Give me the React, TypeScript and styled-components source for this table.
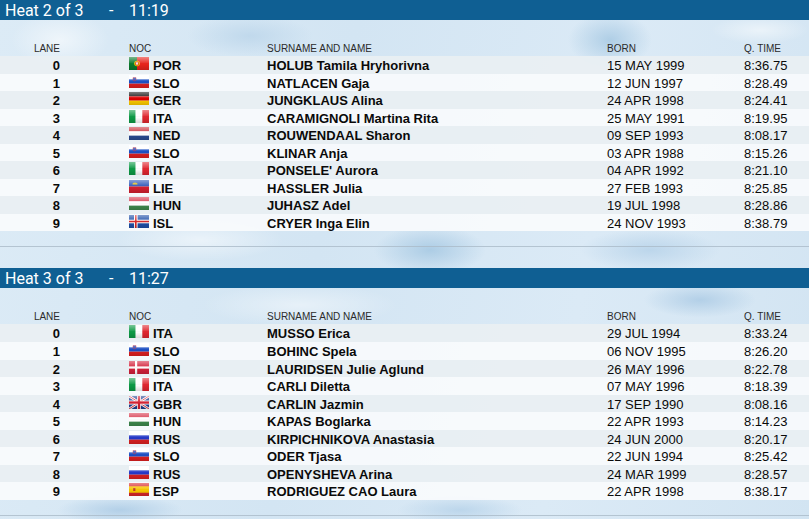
import React, { useId } from "react";
import styled, { createGlobalStyle } from "styled-components";

const Global = createGlobalStyle`
  html, body { margin: 0; padding: 0; }
  body { font-family: "Liberation Sans", Arial, sans-serif; }
`;

const Page = styled.div`
  width: 100%;
  min-height: 100vh;
  overflow: hidden;
  background-color: #d7e8f4;
  background-image:
    radial-gradient(ellipse 70px 40px at 60px 40px, rgba(255,255,255,0.55), transparent 70%),
    radial-gradient(ellipse 90px 30px at 250px 36px, rgba(190,215,235,0.9), transparent 70%),
    radial-gradient(ellipse 60px 40px at 610px 40px, rgba(170,203,228,0.9), transparent 70%),
    radial-gradient(ellipse 80px 35px at 430px 250px, rgba(170,203,228,0.95), transparent 70%),
    radial-gradient(ellipse 120px 30px at 200px 240px, rgba(255,255,255,0.5), transparent 70%),
    radial-gradient(ellipse 100px 30px at 650px 250px, rgba(185,212,234,0.9), transparent 70%),
    radial-gradient(ellipse 80px 25px at 700px 300px, rgba(175,205,230,0.9), transparent 70%),
    radial-gradient(ellipse 140px 30px at 300px 305px, rgba(255,255,255,0.45), transparent 70%),
    radial-gradient(ellipse 90px 20px at 120px 510px, rgba(175,205,230,0.9), transparent 70%),
    radial-gradient(ellipse 90px 20px at 460px 510px, rgba(185,212,234,0.9), transparent 70%),
    radial-gradient(ellipse 70px 20px at 760px 30px, rgba(255,255,255,0.5), transparent 70%),
    linear-gradient(100deg, #dcebf6 0%, #d3e5f3 40%, #dbeaf6 70%, #d2e4f2 100%);
`;

const Section = styled.section`
  display: flex;
  flex-direction: column;
`;

const HeatBar = styled.div`
  height: 20px;
  box-sizing: border-box;
  padding: 2px 0 0 5px;
  background: #0f5f93;
  color: #ffffff;
  font-family: Roboto, "Noto Sans", sans-serif;
  font-size: 16px;
  line-height: 18px;
  display: flex;
  white-space: nowrap;
`;

const HeatTitle = styled.span`
  width: 104px;
`;

const HeatDash = styled.span`
  width: 20px;
`;

const HeatTime = styled.span``;

const Grid = styled.div`
  display: grid;
  grid-template-columns: 129px 138px 340px 137px 1fr;
`;

const HeadRow = styled(Grid)`
  margin-top: 20px;
  height: 16px;
  box-sizing: border-box;
  padding-top: 3px;
  font-size: 10px;
  line-height: 12px;
  color: #2b2b2b;
  text-transform: uppercase;
`;

const Row = styled(Grid)<{ $alt: boolean }>`
  height: 17.56px;
  box-sizing: border-box;
  padding-top: 1px;
  font-size: 13px;
  line-height: 17px;
  color: #0a0a0a;
  background: ${(p) => (p.$alt ? "rgba(251,252,253,0.88)" : "rgba(234,239,243,0.9)")};
  white-space: nowrap;
`;

const LaneCell = styled.div<{ $bold?: boolean }>`
  text-align: right;
  padding-right: 69px;
  font-weight: ${(p) => (p.$bold ? 700 : 400)};
`;

const Cell = styled.div<{ $bold?: boolean }>`
  font-weight: ${(p) => (p.$bold ? 700 : 400)};
`;

const NocCell = styled.div`
  font-weight: 700;
`;

const FlagSvg = styled.svg`
  width: 20px;
  height: 13px;
  margin-right: 4px;
  vertical-align: baseline;
`;

const Divider = styled.div`
  margin-top: 15px;
  height: 1px;
  background: rgba(170, 186, 200, 0.8);
  margin-bottom: 21px;
`;

type Noc =
  | "POR" | "SLO" | "GER" | "ITA" | "NED" | "LIE" | "HUN" | "ISL"
  | "DEN" | "GBR" | "RUS" | "ESP";

const FlagBody: React.FC<{ noc: Noc }> = ({ noc }) => {
  switch (noc) {
    case "POR":
      return (
        <>
          <rect width="20" height="13" fill="#e8231c" />
          <rect width="8" height="13" fill="#0a7a2c" />
          <circle cx="8" cy="6.5" r="2.8" fill="#f5d400" />
          <rect x="6.8" y="5" width="2.4" height="3" fill="#fff" stroke="#c00" strokeWidth="0.6" />
        </>
      );
    case "SLO":
      return (
        <>
          <rect width="20" height="13" fill="#ffffff" />
          <rect y="4.33" width="20" height="4.34" fill="#1b4fc4" />
          <rect y="8.67" width="20" height="4.33" fill="#e02020" />
          <path d="M4 2.6 h3 v2.6 q-1.5 1.6 -3 0 z" fill="#1b4fc4" stroke="#e02020" strokeWidth="0.5" />
        </>
      );
    case "GER":
      return (
        <>
          <rect width="20" height="4.34" fill="#111" />
          <rect y="4.33" width="20" height="4.34" fill="#dd0000" />
          <rect y="8.67" width="20" height="4.33" fill="#ffce00" />
        </>
      );
    case "ITA":
      return (
        <>
          <rect width="6.67" height="13" fill="#0d9a45" />
          <rect x="6.67" width="6.66" height="13" fill="#ffffff" />
          <rect x="13.33" width="6.67" height="13" fill="#e0262f" />
        </>
      );
    case "NED":
      return (
        <>
          <rect width="20" height="4.34" fill="#c9303b" />
          <rect y="4.33" width="20" height="4.34" fill="#ffffff" />
          <rect y="8.67" width="20" height="4.33" fill="#2a4c93" />
        </>
      );
    case "LIE":
      return (
        <>
          <rect width="20" height="6.5" fill="#2a55b8" />
          <rect y="6.5" width="20" height="6.5" fill="#d42030" />
          <path d="M3.5 4.4 l0.5 -2 l1 1 l1 -1.4 l1 1.4 l1 -1 l0.5 2 z" fill="#f2c500" />
        </>
      );
    case "HUN":
      return (
        <>
          <rect width="20" height="4.34" fill="#d7364a" />
          <rect y="4.33" width="20" height="4.34" fill="#ffffff" />
          <rect y="8.67" width="20" height="4.33" fill="#3f8a4e" />
        </>
      );
    case "ISL":
      return (
        <>
          <rect width="20" height="13" fill="#1f4fa8" />
          <rect x="5" width="3.6" height="13" fill="#fff" />
          <rect y="4.7" width="20" height="3.6" fill="#fff" />
          <rect x="6" width="1.6" height="13" fill="#d72828" />
          <rect y="5.7" width="20" height="1.6" fill="#d72828" />
        </>
      );
    case "DEN":
      return (
        <>
          <rect width="20" height="13" fill="#d3213b" />
          <rect x="6" width="2.2" height="13" fill="#fff" />
          <rect y="5.4" width="20" height="2.2" fill="#fff" />
        </>
      );
    case "GBR":
      return (
        <>
          <rect width="20" height="13" fill="#1f3f8f" />
          <path d="M0 0 L20 13 M20 0 L0 13" stroke="#fff" strokeWidth="2.6" />
          <path d="M0 0 L20 13 M20 0 L0 13" stroke="#d42030" strokeWidth="0.9" />
          <rect x="8" width="4" height="13" fill="#fff" />
          <rect y="4.5" width="20" height="4" fill="#fff" />
          <rect x="8.8" width="2.4" height="13" fill="#d42030" />
          <rect y="5.3" width="20" height="2.4" fill="#d42030" />
        </>
      );
    case "RUS":
      return (
        <>
          <rect width="20" height="4.34" fill="#ffffff" />
          <rect y="4.33" width="20" height="4.34" fill="#2438c8" />
          <rect y="8.67" width="20" height="4.33" fill="#dd2222" />
        </>
      );
    case "ESP":
      return (
        <>
          <rect width="20" height="13" fill="#d8262b" />
          <rect y="3.25" width="20" height="6.5" fill="#f7c600" />
          <rect x="4.2" y="5" width="2.2" height="3" fill="#c0392b" />
        </>
      );
  }
};

const Flag: React.FC<{ noc: Noc }> = ({ noc }) => {
  const id = useId().replace(/:/g, "");
  return (
    <FlagSvg viewBox="0 0 20 13" aria-hidden="true">
      <defs>
        <linearGradient id={`g${id}`} x1="0" y1="0" x2="0" y2="1">
          <stop offset="0" stopColor="#fff" stopOpacity="0.45" />
          <stop offset="0.45" stopColor="#fff" stopOpacity="0.08" />
          <stop offset="0.55" stopColor="#000" stopOpacity="0" />
          <stop offset="1" stopColor="#000" stopOpacity="0.15" />
        </linearGradient>
      </defs>
      <FlagBody noc={noc} />
      <rect width="20" height="13" fill={`url(#g${id})`} />
    </FlagSvg>
  );
};

type Athlete = [number, Noc, string, string, string];

const heats: { title: string; time: string; rows: Athlete[] }[] = [
  {
    title: "Heat 2 of 3",
    time: "11:19",
    rows: [
      [0, "POR", "HOLUB Tamila Hryhorivna", "15 MAY 1999", "8:36.75"],
      [1, "SLO", "NATLACEN Gaja", "12 JUN 1997", "8:28.49"],
      [2, "GER", "JUNGKLAUS Alina", "24 APR 1998", "8:24.41"],
      [3, "ITA", "CARAMIGNOLI Martina Rita", "25 MAY 1991", "8:19.95"],
      [4, "NED", "ROUWENDAAL Sharon", "09 SEP 1993", "8:08.17"],
      [5, "SLO", "KLINAR Anja", "03 APR 1988", "8:15.26"],
      [6, "ITA", "PONSELE' Aurora", "04 APR 1992", "8:21.10"],
      [7, "LIE", "HASSLER Julia", "27 FEB 1993", "8:25.85"],
      [8, "HUN", "JUHASZ Adel", "19 JUL 1998", "8:28.86"],
      [9, "ISL", "CRYER Inga Elin", "24 NOV 1993", "8:38.79"],
    ],
  },
  {
    title: "Heat 3 of 3",
    time: "11:27",
    rows: [
      [0, "ITA", "MUSSO Erica", "29 JUL 1994", "8:33.24"],
      [1, "SLO", "BOHINC Spela", "06 NOV 1995", "8:26.20"],
      [2, "DEN", "LAURIDSEN Julie Aglund", "26 MAY 1996", "8:22.78"],
      [3, "ITA", "CARLI Diletta", "07 MAY 1996", "8:18.39"],
      [4, "GBR", "CARLIN Jazmin", "17 SEP 1990", "8:08.16"],
      [5, "HUN", "KAPAS Boglarka", "22 APR 1993", "8:14.23"],
      [6, "RUS", "KIRPICHNIKOVA Anastasia", "24 JUN 2000", "8:20.17"],
      [7, "SLO", "ODER Tjasa", "22 JUN 1994", "8:25.42"],
      [8, "RUS", "OPENYSHEVA Arina", "24 MAR 1999", "8:28.57"],
      [9, "ESP", "RODRIGUEZ CAO Laura", "22 APR 1998", "8:38.17"],
    ],
  },
];

export default function App() {
  return (
    <Page>
      <Global />
      {heats.map((h) => (
        <Section key={h.title}>
          <HeatBar>
            <HeatTitle>{h.title}</HeatTitle>
            <HeatDash>-</HeatDash>
            <HeatTime>{h.time}</HeatTime>
          </HeatBar>
          <HeadRow>
            <LaneCell>Lane</LaneCell>
            <Cell>NOC</Cell>
            <Cell>Surname and Name</Cell>
            <Cell>Born</Cell>
            <Cell>Q. Time</Cell>
          </HeadRow>
          {h.rows.map((r, i) => (
            <Row key={r[0]} $alt={i % 2 === 1}>
              <LaneCell $bold>{r[0]}</LaneCell>
              <NocCell>
                <Flag noc={r[1]} />
                {r[1]}
              </NocCell>
              <Cell $bold>{r[2]}</Cell>
              <Cell>{r[3]}</Cell>
              <Cell>{r[4]}</Cell>
            </Row>
          ))}
          <Divider />
        </Section>
      ))}
    </Page>
  );
}
